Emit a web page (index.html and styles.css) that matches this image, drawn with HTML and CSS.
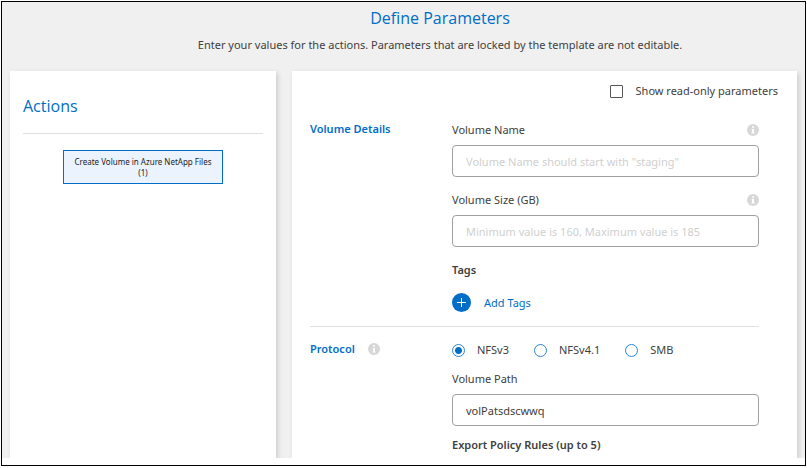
FILE: index.html
```html
<!DOCTYPE html>
<html lang="en">
<head>
<meta charset="utf-8">
<title>Define Parameters</title>
<link rel="stylesheet" href="styles.css">
</head>
<body>
<svg class="sprite" aria-hidden="true">
  <symbol id="info" viewBox="0 0 12 12">
    <circle cx="6" cy="6" r="6" fill="#d7d7d7"/>
    <path d="M5 2.3h2v1.5H5zM4.6 4.9H7v3.6h.6v.9H4.5v-.9h.6V5.8h-.5z" fill="#fff"/>
  </symbol>
</svg>
<div class="frame">
  <main class="page">
    <header class="intro">
      <h1>Define Parameters</h1>
      <p>Enter your values for the actions. Parameters that are locked by the template are not editable.</p>
    </header>
    <div class="columns">
      <aside class="panel actions">
        <h2>Actions</h2>
        <button type="button" class="action">Create Volume in Azure NetApp Files (1)</button>
      </aside>
      <form class="panel params">
        <label class="readonly"><input type="checkbox" class="check">Show read-only parameters</label>
        <section class="section">
          <h3>Volume Details</h3>
          <div class="fields">
            <div class="field">
              <div class="field-head"><label for="name">Volume Name</label><svg class="info"><use href="#info"/></svg></div>
              <input class="text" id="name" type="text" placeholder="Volume Name should start with &quot;staging&quot;">
            </div>
            <div class="field">
              <div class="field-head"><label for="size">Volume Size (GB)</label><svg class="info"><use href="#info"/></svg></div>
              <input class="text" id="size" type="text" placeholder="Minimum value is 160, Maximum value is 185">
            </div>
            <h4>Tags</h4>
            <button type="button" class="add">
              <svg class="plus" viewBox="0 0 19 19"><circle cx="9.5" cy="9.5" r="9.5" fill="#006dc9"/><path d="M9.5 5v9M5 9.5h9" stroke="#fff" stroke-width="1"/></svg>
              Add Tags
            </button>
          </div>
        </section>
        <section class="section">
          <h3>Protocol <svg class="info"><use href="#info"/></svg></h3>
          <div class="fields">
            <div class="radios">
              <label><input type="radio" name="protocol" checked>NFSv3</label>
              <label><input type="radio" name="protocol">NFSv4.1</label>
              <label><input type="radio" name="protocol">SMB</label>
            </div>
            <div class="field">
              <div class="field-head"><label for="path">Volume Path</label></div>
              <input class="text" id="path" type="text" value="volPatsdscwwq">
            </div>
            <h4>Export Policy Rules (up to 5)</h4>
          </div>
        </section>
      </form>
    </div>
  </main>
</div>
</body>
</html>
```
FILE: styles.css
```css
* {
  box-sizing: border-box;
}

body {
  margin: 0;
  padding: 1px 1px 2px;
  min-height: 100vh;
  display: flex;
  background: #fff;
  color: #404040;
  font: 11px/16px "Noto Sans", "Open Sans", sans-serif;
}

h1, h2, h3, h4, p {
  margin: 0;
}

button, input {
  font: inherit;
  color: inherit;
  margin: 0;
}

.sprite {
  display: none;
}

.frame {
  flex: 1;
  display: flex;
  border: 1px solid #000;
  padding-bottom: 7px;
}

.page {
  flex: 1;
  display: flex;
  flex-direction: column;
  padding: 0 8px;
  background: #f0f0f0;
  overflow: hidden;
}

.intro {
  padding: 4px 0 18px 73px;
  text-align: center;
}

.intro h1,
.actions h2 {
  font-family: "Open Sans", sans-serif;
  font-size: 16px;
  line-height: 24px;
  font-weight: 400;
  color: #006dc9;
}

.intro p {
  margin-top: 7px;
}

.columns {
  flex: 1;
  display: grid;
  grid-template-columns: 266px 1fr;
  gap: 16px;
}

.panel {
  background: #fff;
  box-shadow: 2px 2px 5px rgba(0, 0, 0, 0.15);
}

.actions {
  padding: 23px 13px;
}

.actions h2 {
  padding-bottom: 15px;
  border-bottom: 1px solid #e0e0e0;
}

.action {
  display: block;
  width: 160px;
  margin: 16px auto 0;
  padding: 5px 8px;
  border: 1px solid #006dc9;
  background: #ebf3ff;
  color: #222;
  font-size: 8px;
  line-height: 11px;
}

.params {
  padding: 12px 38px 4px 18px;
}

.readonly {
  display: flex;
  justify-content: flex-end;
  align-items: center;
  gap: 13px;
  margin-right: -19px;
}

.check {
  appearance: none;
  width: 13px;
  height: 13px;
  border: 1px solid #555;
  border-radius: 1px;
}

.section {
  display: grid;
  grid-template-columns: 142px 1fr;
  padding: 15px 0 14px;
}

.readonly + .section {
  padding-top: 23px;
}

.section + .section {
  border-top: 1px solid #e0e0e0;
  padding-bottom: 0;
}

.section h3 {
  display: flex;
  align-items: center;
  align-self: start;
  gap: 13px;
  font-size: 11px;
  font-weight: 600;
  line-height: 14px;
  color: #006dc9;
}

.info {
  width: 12px;
  height: 12px;
}

.field {
  margin-bottom: 15px;
}

.section + .section .field {
  margin-bottom: 11px;
}

.field-head {
  display: flex;
  justify-content: space-between;
  align-items: center;
  margin-bottom: 7px;
}

.text {
  display: block;
  width: 100%;
  height: 32px;
  padding: 0 13px;
  border: 1px solid #a0a0a0;
  border-radius: 4px;
  background: #fff;
}

.text::placeholder {
  color: #cfcfcf;
}

h4 {
  font-size: 11px;
  font-weight: 600;
}

.add {
  display: flex;
  align-items: center;
  gap: 13px;
  margin-top: 15px;
  padding: 0;
  border: 0;
  background: none;
  color: #006dc9;
}

.plus {
  width: 19px;
  height: 19px;
}

.radios {
  display: flex;
  gap: 25px;
  margin-bottom: 13px;
}

.radios label {
  display: flex;
  align-items: center;
  gap: 12px;
}

.radios input {
  appearance: none;
  width: 13px;
  height: 13px;
  border: 1px solid #2b85d3;
  border-radius: 50%;
}

.radios input:checked {
  background: radial-gradient(circle, #006dc9 3px, #fff 4px);
}
```
